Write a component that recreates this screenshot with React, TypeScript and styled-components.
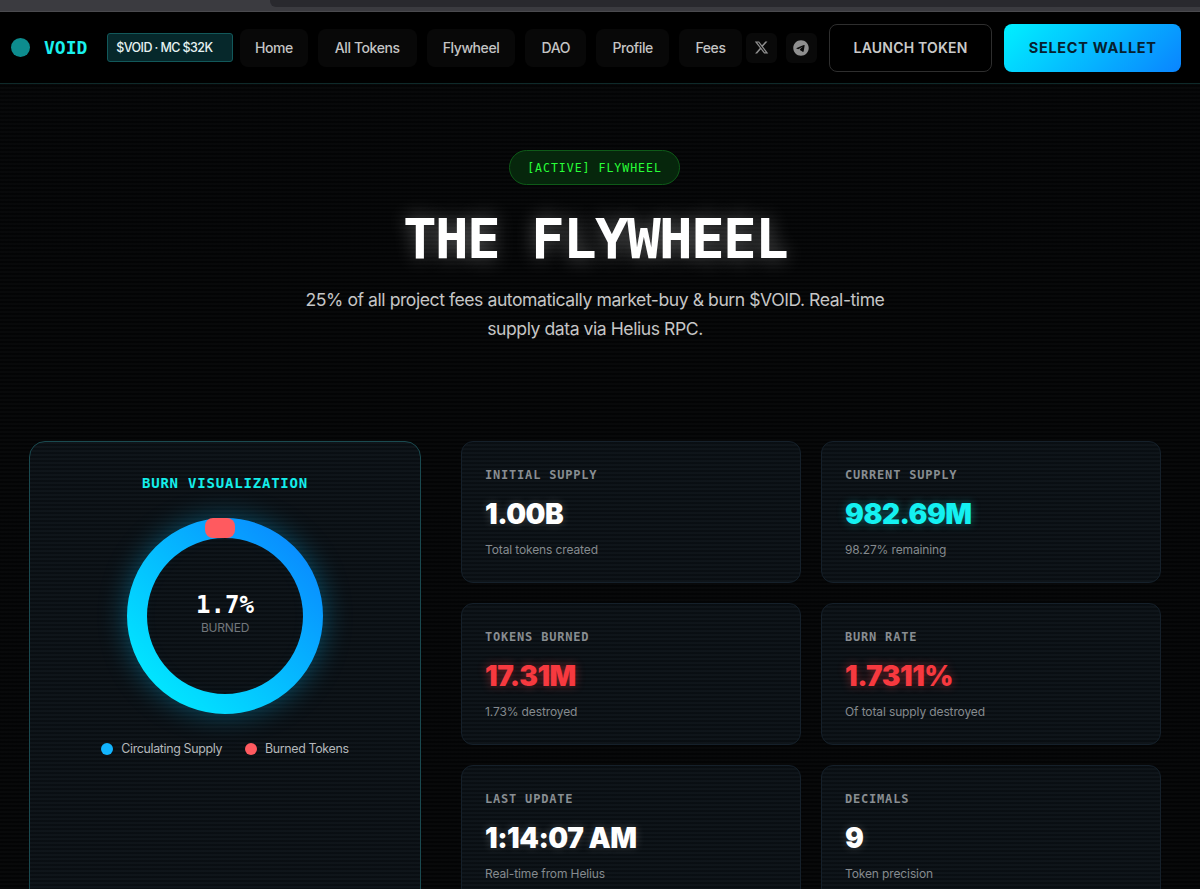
import React from "react";
import styled, { createGlobalStyle, css } from "styled-components";
import { FaXTwitter, FaTelegram } from "react-icons/fa6";

const mono = `"DejaVu Sans Mono", "Liberation Mono", monospace`;
const sans = `Inter, "Liberation Sans", sans-serif`;

const scanlines = css`
  background-image: repeating-linear-gradient(
    0deg,
    rgba(255, 255, 255, 0.014) 0 2px,
    rgba(0, 0, 0, 0.16) 2px 4px
  );
`;

const GlobalStyle = createGlobalStyle`
  html, body {
    margin: 0;
    height: 889px;
    overflow: hidden;
    background: #040506;
  }
  * {
    box-sizing: border-box;
  }
`;

const ChromeStrip = styled.div`
  display: flex;
  align-items: flex-start;
  height: 12px;
  background: #3b3b40;
  border-bottom: 1px solid #4a4a4e;
`;

const ChromeTab = styled.div`
  flex: 1;
  height: 7px;
  margin-left: 270px;
  background: #29292e;
  border-bottom-left-radius: 6px;
`;

const Nav = styled.nav`
  display: flex;
  align-items: center;
  height: 72px;
  padding: 0 19px 0 11px;
  background: #000;
  border-bottom: 1px solid #0f2a2a;
`;

const Dot = styled.div`
  width: 19px;
  height: 19px;
  border-radius: 50%;
  background: #0d8c8e;
  margin-right: 14px;
`;

const Logo = styled.div`
  font-family: ${mono};
  font-weight: 700;
  font-size: 18px;
  color: #19f0ee;
  margin-right: 20px;
`;

const Chip = styled.div`
  display: flex;
  align-items: center;
  width: 126px;
  height: 29px;
  padding-left: 8px;
  margin-right: 7px;
  font-family: ${sans};
  font-size: 12.5px;
  font-weight: 500;
  letter-spacing: -0.6px;
  color: #e6f2f2;
  background: #06282b;
  border: 1px solid #12585a;
  border-radius: 3px;
`;

const NavLink = styled.div<{ $w: number; $gap?: number }>`
  display: flex;
  align-items: center;
  justify-content: center;
  width: ${({ $w }) => $w}px;
  height: 38px;
  margin-right: ${({ $gap }) => $gap ?? 10}px;
  font-family: ${sans};
  font-size: 14px;
  font-weight: 500;
  letter-spacing: -0.4px;
  color: #c4c4c4;
  background: #080808;
  border-radius: 8px;
`;

const IconLink = styled.div<{ $gap: number }>`
  display: flex;
  align-items: center;
  justify-content: center;
  width: 31px;
  height: 30px;
  margin-right: ${({ $gap }) => $gap}px;
  color: #8f8f8f;
  background: #090909;
  border-radius: 6px;
`;

const LaunchButton = styled.div`
  display: flex;
  align-items: center;
  justify-content: center;
  width: 164px;
  height: 48px;
  margin-right: 12px;
  font-family: ${sans};
  font-size: 14px;
  font-weight: 600;
  letter-spacing: 0.2px;
  color: #c9c9c9;
  border: 1px solid #2e2e2e;
  border-radius: 8px;
`;

const WalletButton = styled.div`
  display: flex;
  align-items: center;
  justify-content: center;
  width: 177px;
  height: 48px;
  font-family: ${sans};
  font-size: 14.5px;
  font-weight: 700;
  letter-spacing: 0.7px;
  color: #06202e;
  background: linear-gradient(135deg, #00f0ff, #0a84ff);
  border-radius: 8px;
`;

const Main = styled.main`
  ${scanlines}
  width: 1200px;
  padding: 66px 39px 0 29px;
`;

const Hero = styled.header`
  display: flex;
  flex-direction: column;
  align-items: center;
  margin-bottom: 98px;
`;

const Pill = styled.div`
  display: flex;
  align-items: center;
  justify-content: center;
  width: 171px;
  height: 35px;
  font-family: ${mono};
  font-size: 11.5px;
  letter-spacing: 1px;
  color: #28ff38;
  background: #06260c;
  border: 1px solid #0e5a18;
  border-radius: 18px;
  margin: 0 1px 20px 0;
`;

const Title = styled.h1`
  margin: 0 0 12px;
  font-family: ${mono};
  font-size: 56px;
  line-height: 68px;
  font-weight: 700;
  letter-spacing: -1.7px;
  color: #fff;
  text-shadow: 0 0 20px rgba(255, 255, 255, 0.35);
`;

const Lead = styled.p`
  margin: 0;
  width: 600px;
  font-family: ${sans};
  font-size: 17.6px;
  line-height: 29px;
  font-weight: 400;
  letter-spacing: -0.45px;
  text-align: center;
  color: #c6c6c6;
`;

const Columns = styled.div`
  display: grid;
  grid-template-columns: 392px 1fr;
  gap: 40px;
`;

const BurnPanel = styled.section`
  ${scanlines}
  display: flex;
  flex-direction: column;
  align-items: center;
  height: 480px;
  padding-top: 32px;
  background-color: #0b1116;
  border: 1px solid #1a4a50;
  border-radius: 16px;
`;

const PanelTitle = styled.h3`
  margin: 0 0 26px;
  font-family: ${mono};
  font-size: 14px;
  line-height: 18px;
  font-weight: 700;
  letter-spacing: 0.8px;
  color: #14eeea;
`;

const RingWrap = styled.div`
  position: relative;
  width: 196px;
  height: 196px;
  margin-bottom: 27px;
  border-radius: 50%;
  box-shadow: 0 0 28px rgba(0, 190, 255, 0.36), inset 0 0 24px rgba(0, 190, 255, 0.35);
`;

const RingCenter = styled.div`
  position: absolute;
  inset: 0;
  display: flex;
  flex-direction: column;
  align-items: center;
  justify-content: center;
  padding-bottom: 4px;
`;

const Percent = styled.div`
  font-family: ${mono};
  font-weight: 700;
  font-size: 24px;
  line-height: 28px;
  color: #fff;
`;

const RingLabel = styled.div`
  font-family: ${sans};
  font-size: 12px;
  line-height: 18px;
  letter-spacing: -0.2px;
  color: #72777c;
`;

const Legend = styled.div`
  display: flex;
  gap: 23px;
`;

const LegendItem = styled.div`
  display: flex;
  align-items: center;
  gap: 8px;
  font-family: ${sans};
  font-size: 12.4px;
  line-height: 16px;
  letter-spacing: -0.34px;
  color: #b4b8bb;
`;

const LegendDot = styled.span<{ $color: string }>`
  width: 12px;
  height: 12px;
  border-radius: 50%;
  background: ${({ $color }) => $color};
`;

const StatGrid = styled.div`
  display: grid;
  grid-template-columns: 340px 340px;
  grid-auto-rows: 142px;
  gap: 20px;
`;

const StatCard = styled.div`
  ${scanlines}
  display: flex;
  flex-direction: column;
  padding: 24px 23px 0;
  background-color: #0b1116;
  border: 1px solid #15202a;
  border-radius: 12px;
`;

const StatLabel = styled.div`
  font-family: ${mono};
  font-size: 12px;
  line-height: 18px;
  font-weight: 700;
  letter-spacing: 0.8px;
  color: #888d91;
  margin-bottom: 12px;
`;

const StatValue = styled.div<{ $color: string; $glow: string }>`
  font-family: ${sans};
  font-size: 28px;
  line-height: 36px;
  font-weight: 900;
  letter-spacing: -0.5px;
  color: ${({ $color }) => $color};
  text-shadow: 0 0 10px ${({ $glow }) => $glow};
  margin-bottom: 9px;
`;

const StatNote = styled.div`
  font-family: ${sans};
  font-size: 12px;
  line-height: 18px;
  letter-spacing: -0.12px;
  color: #858a8e;
`;

const links = [
  { label: "Home", w: 68 },
  { label: "All Tokens", w: 99 },
  { label: "Flywheel", w: 89 },
  { label: "DAO", w: 61 },
  { label: "Profile", w: 73 },
];

const white = { color: "#ffffff", glow: "rgba(255,255,255,0.2)" };
const cyan = { color: "#14f1f1", glow: "rgba(20,241,241,0.35)" };
const red = { color: "#f7393f", glow: "rgba(247,57,63,0.45)" };

const stats = [
  { label: "INITIAL SUPPLY", value: "1.00B", note: "Total tokens created", tone: white },
  { label: "CURRENT SUPPLY", value: "982.69M", note: "98.27% remaining", tone: cyan },
  { label: "TOKENS BURNED", value: "17.31M", note: "1.73% destroyed", tone: red },
  { label: "BURN RATE", value: "1.7311%", note: "Of total supply destroyed", tone: red },
  { label: "LAST UPDATE", value: "1:14:07 AM", note: "Real-time from Helius", tone: white },
  { label: "DECIMALS", value: "9", note: "Token precision", tone: white },
];

const BurnRing = () => (
  <svg width="196" height="196" viewBox="0 0 196 196">
    <defs>
      <linearGradient id="ringFill" x1="0" y1="1" x2="1" y2="0">
        <stop offset="0" stopColor="#00f0ff" />
        <stop offset="1" stopColor="#0a84ff" />
      </linearGradient>
    </defs>
    <circle cx="98" cy="98" r="88" fill="none" stroke="url(#ringFill)" strokeWidth="20" />
    <rect x="78" y="0" width="30" height="20" rx="8" fill="#ff5a5f" />
  </svg>
);

const App: React.FC = () => {
  return (
    <>
      <GlobalStyle />
      <ChromeStrip>
        <ChromeTab />
      </ChromeStrip>
      <Nav>
        <Dot />
        <Logo>VOID</Logo>
        <Chip>$VOID · MC $32K</Chip>
        {links.map((link) => (
          <NavLink key={link.label} $w={link.w}>{link.label}</NavLink>
        ))}
        <NavLink $w={63} $gap={4}>Fees</NavLink>
        <IconLink $gap={9}><FaXTwitter size={15} /></IconLink>
        <IconLink $gap={12}><FaTelegram size={16} /></IconLink>
        <LaunchButton>LAUNCH TOKEN</LaunchButton>
        <WalletButton>SELECT WALLET</WalletButton>
      </Nav>
      <Main>
        <Hero>
          <Pill>[ACTIVE] FLYWHEEL</Pill>
          <Title>THE FLYWHEEL</Title>
          <Lead>25% of all project fees automatically market-buy &amp; burn $VOID. Real-time<br />supply data via Helius RPC.</Lead>
        </Hero>
        <Columns>
          <BurnPanel>
            <PanelTitle>BURN VISUALIZATION</PanelTitle>
            <RingWrap>
              <BurnRing />
              <RingCenter>
                <Percent>1.7%</Percent>
                <RingLabel>BURNED</RingLabel>
              </RingCenter>
            </RingWrap>
            <Legend>
              <LegendItem><LegendDot $color="#12b5ff" />Circulating Supply</LegendItem>
              <LegendItem><LegendDot $color="#ff5a5f" />Burned Tokens</LegendItem>
            </Legend>
          </BurnPanel>
          <StatGrid>
            {stats.map((stat) => (
              <StatCard key={stat.label}>
                <StatLabel>{stat.label}</StatLabel>
                <StatValue $color={stat.tone.color} $glow={stat.tone.glow}>{stat.value}</StatValue>
                <StatNote>{stat.note}</StatNote>
              </StatCard>
            ))}
          </StatGrid>
        </Columns>
      </Main>
    </>
  );
};

export default App;
